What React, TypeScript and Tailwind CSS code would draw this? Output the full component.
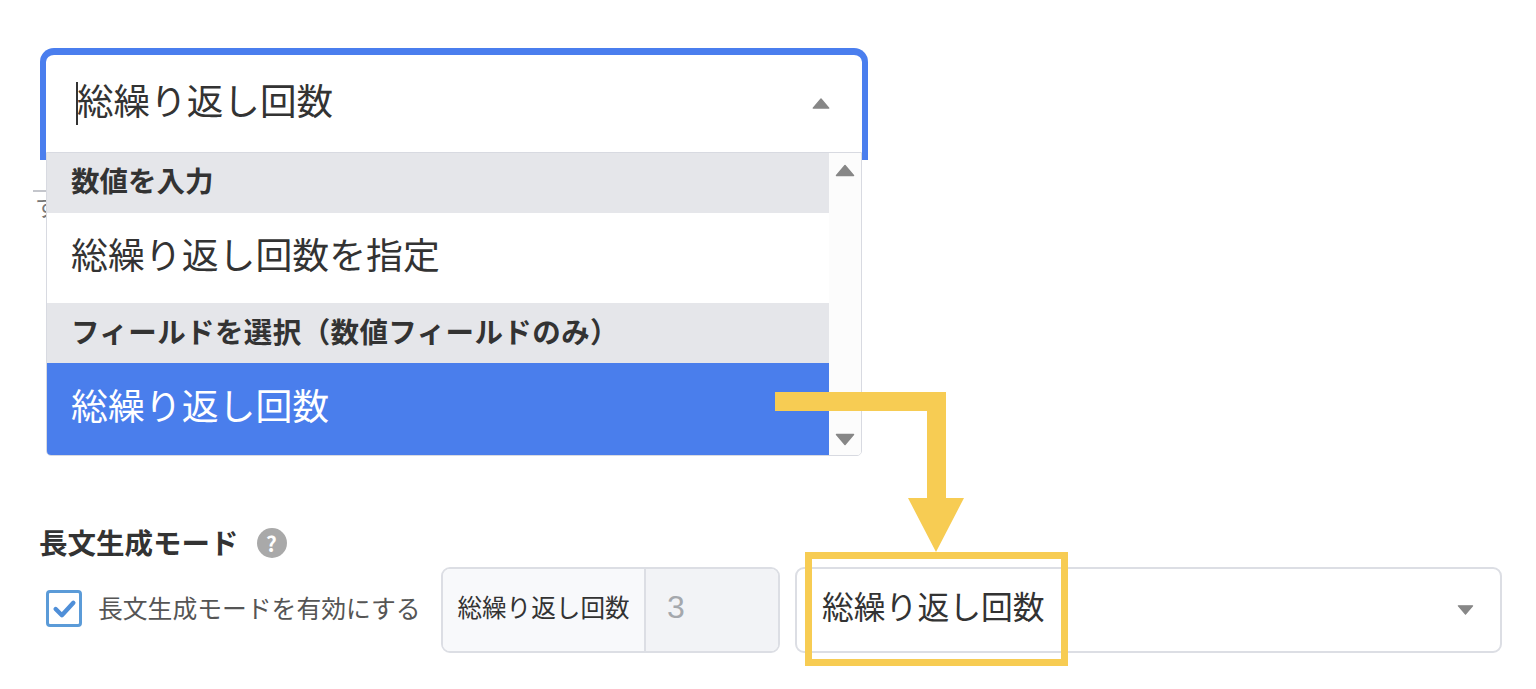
const Tri = ({ up, className }: { up?: boolean; className: string }) => (
  <svg viewBox="0 0 20 12" className={className} fill="#878787" stroke="#878787" strokeWidth="1.5" strokeLinejoin="round">
    {up ? <polygon points="1.5,11 18.5,11 10,1" /> : <polygon points="1.5,1 18.5,1 10,11" />}
  </svg>
);

export default function App() {
  return (
    <div className="relative h-[689px] w-[1536px] overflow-hidden bg-white pl-[40px] pr-[34px] pt-[48px] text-[#333] font-['Noto_Sans_CJK_JP','Noto_Sans',sans-serif]">
      {/* Open select */}
      <div className="relative z-10 h-[112px] w-[828px] rounded-t-[14px] border-x-[6px] border-t-[7px] border-[#4a7eee] bg-white">
        <div className="flex h-[96px] items-center pl-[30px] pr-[31px]">
          <span className="h-[43px] w-[2px] shrink-0 bg-[#333]" />
          <span className="-ml-[1px] mb-[5px] flex-1 text-[36.6px] leading-none">総繰り返し回数</span>
          <Tri up className="h-[11px] w-[20px]" />
        </div>
        <div className="absolute left-0 top-[97px] flex h-[304px] w-[816px] overflow-hidden rounded-b-[5px] border-[1.5px] border-[#d8dae1] bg-white">
          <div className="flex w-[782px] flex-col">
            <div className="flex h-[60px] items-center bg-[#e5e6ea] pb-[5px] pl-[24px] text-[28.5px] font-bold leading-none">数値を入力</div>
            <div className="flex h-[90px] items-center pb-[10px] pl-[24px] text-[36.9px] leading-none">総繰り返し回数を指定</div>
            <div className="flex h-[60px] items-center bg-[#e5e6ea] pb-[4px] pl-[24px] text-[28.5px] font-bold leading-none tracking-[0.4px]">フィールドを選択（数値フィールドのみ）</div>
            <div className="flex flex-1 items-center bg-[#4a7eec] pb-[10px] pl-[24px] text-[36.9px] leading-none text-white">総繰り返し回数</div>
          </div>
          <div className="flex flex-1 flex-col items-center justify-between bg-[#fcfcfc] pb-[8px] pt-[10px]">
            <Tri up className="h-[15px] w-[20px]" />
            <Tri className="h-[15px] w-[20px]" />
          </div>
        </div>
      </div>

      {/* Field partly hidden behind the dropdown */}
      <div className="-ml-[7px] mt-[30px] h-[40px] w-[40px] border-t-2 border-[#c4c6cc] pl-[2px] text-[24px] leading-[28px] text-[#777]">す</div>

      {/* Long text mode */}
      <div className="mt-[293px] flex h-[40px] items-center gap-[18px]">
        <h2 className="-ml-[1px] pb-[1px] text-[28.5px] font-bold leading-none">長文生成モード</h2>
        <span className="flex h-[30px] w-[30px] items-center justify-center rounded-full bg-[#a9a9a9] text-[21px] font-bold leading-none text-white">?</span>
      </div>
      <div className="mt-[4px] flex h-[86px] items-center">
        <span className="mb-[3px] ml-[6px] flex h-[37px] w-[36px] shrink-0 items-center justify-center rounded-[4px] border-[3px] border-[#5b9bd8]">
          <svg viewBox="0 0 24 24" className="h-[25px] w-[25px]" fill="none" stroke="#4f8fd8" strokeWidth="4.2" strokeLinecap="round" strokeLinejoin="round">
            <path d="M3.5 12.5 9.5 18.5 20.5 6.5" />
          </svg>
        </span>
        <span className="mb-[5px] ml-[16px] w-[320px] shrink-0 whitespace-nowrap text-[24.8px] leading-none text-[#555]">長文生成モードを有効にする</span>
        <div className="ml-[23px] flex h-[86px] w-[339px] shrink-0 overflow-hidden rounded-[9px] border-2 border-[#dcdee4]">
          <div className="flex w-[203px] items-center justify-center border-r-2 border-[#dcdee4] bg-[#f8f9fb] pb-[8px] text-[24.6px] leading-none">総繰り返し回数</div>
          <div className="flex flex-1 items-center bg-[#f2f3f6] pb-[7px] pl-[21px] font-['Liberation_Sans',sans-serif] text-[32px] leading-none text-[#a5a8ad]">3</div>
        </div>
        <div className="ml-[15px] flex h-[86px] flex-1 items-center justify-between rounded-[9px] border-2 border-[#dcdee4] pl-[25px] pr-[25px]">
          <span className="mb-[9px] text-[31.8px] leading-none">総繰り返し回数</span>
          <Tri className="h-[10px] w-[19px]" />
        </div>
      </div>

      {/* Annotation */}
      <div className="absolute left-[805px] top-[552px] z-20 h-[114px] w-[263px] border-[7px] border-[#f7cc53]" />
      <svg className="absolute left-0 top-0 z-20 h-[689px] w-[1536px]" viewBox="0 0 1536 689" fill="#f7cc53">
        <polygon points="775,392 946,392 946,498 964,498 936,552 908,498 927,498 927,411 775,411" />
      </svg>
    </div>
  );
}
